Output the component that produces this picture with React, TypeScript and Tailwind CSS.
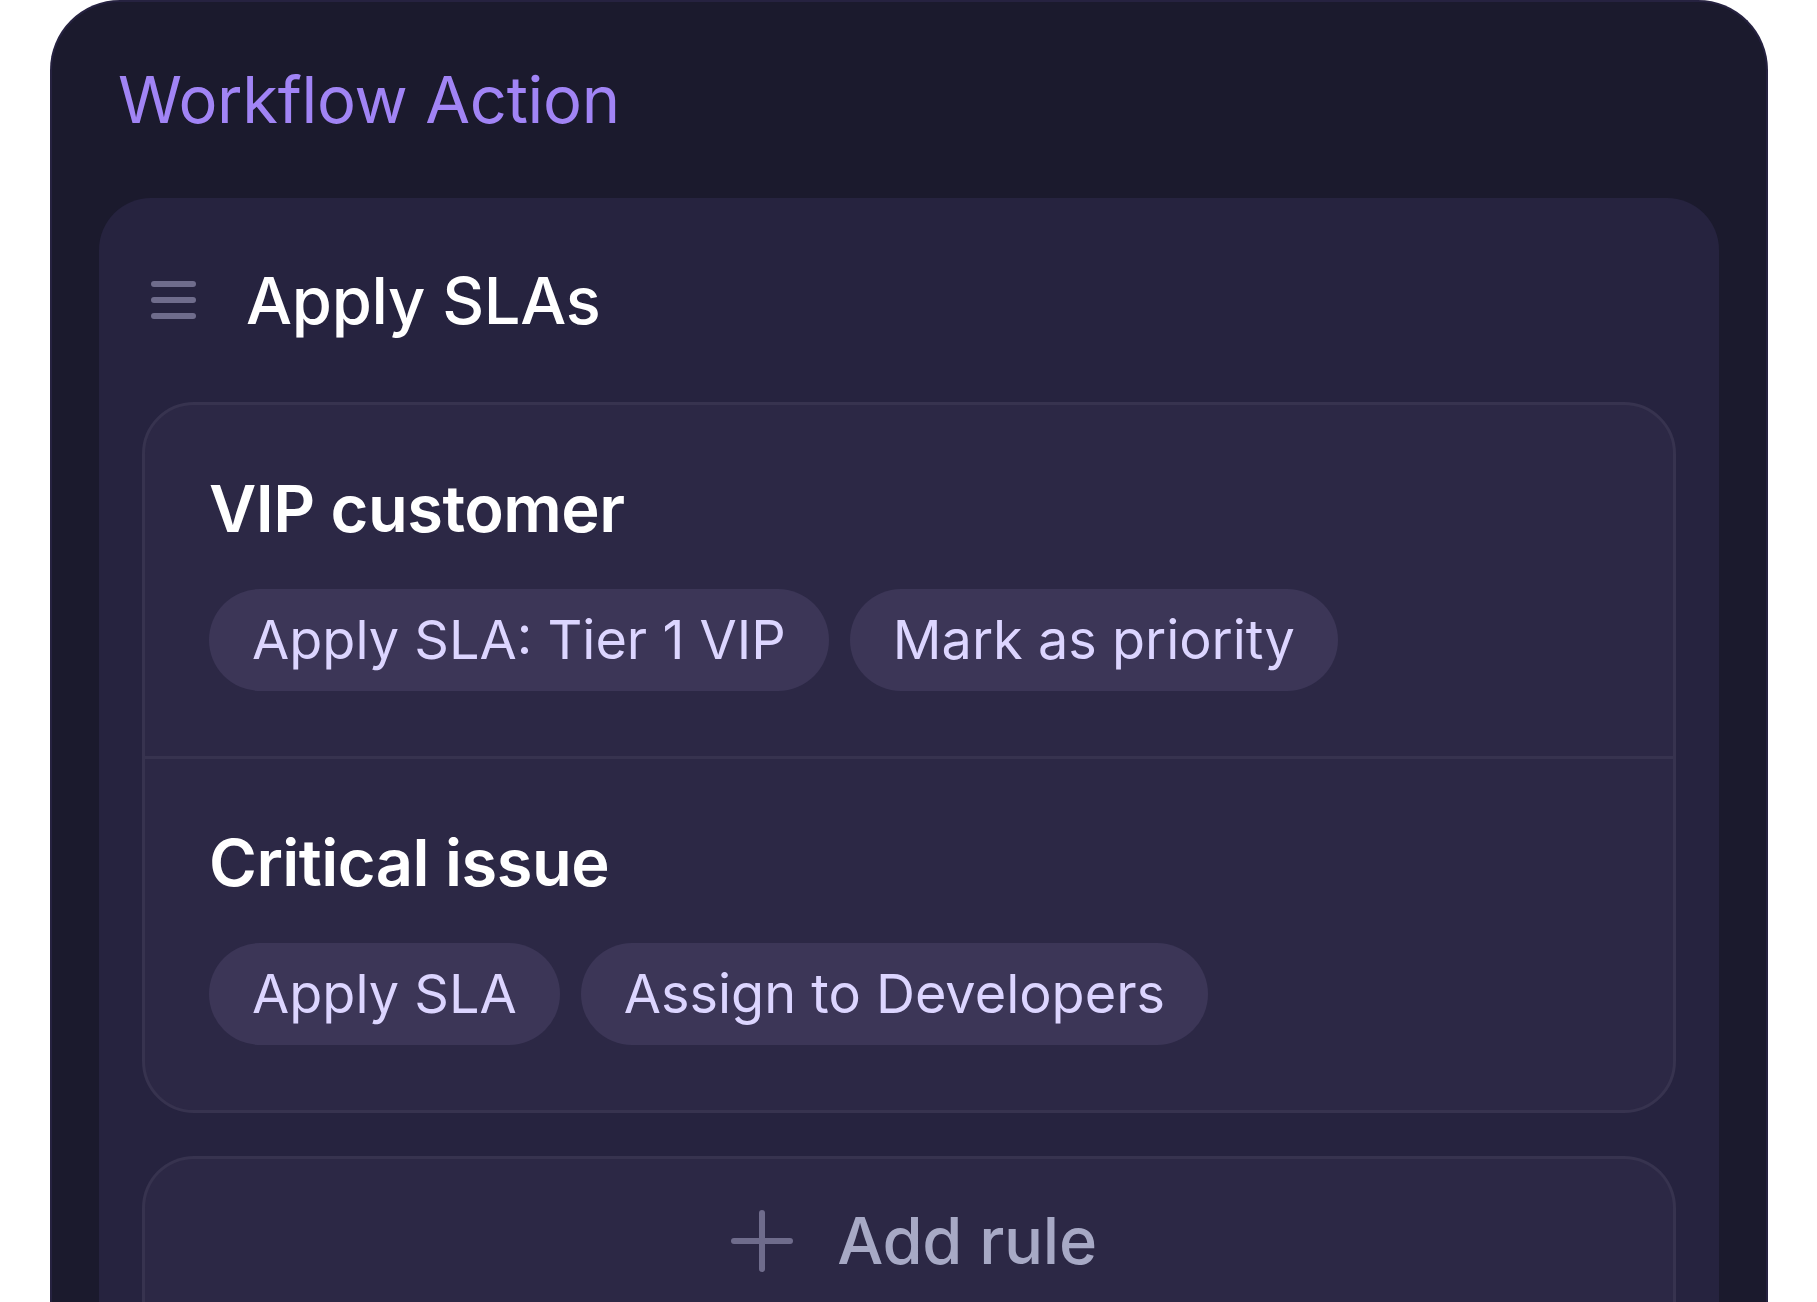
import React from "react";

const font = { fontFamily: "Inter, 'Noto Sans', sans-serif" };

function Chip({ label }: { label: string }) {
  return (
    <div className="flex h-[102px] items-center rounded-full bg-[#3c3657] px-[43px] text-[54px] font-normal leading-none text-[#dcd5ff]">
      {label}
    </div>
  );
}

function RuleSection({ title, chips, divider }: { title: string; chips: string[]; divider?: boolean }) {
  return (
    <div className={`flex flex-col pl-[64px] pt-[65px] pb-[65px] ${divider ? "border-b-[3px] border-[#37334f]" : ""}`}>
      <div className="text-[65px] font-semibold leading-[78px] tracking-[-0.5px] text-white">{title}</div>
      <div className="mt-[41px] flex gap-[21px]">
        {chips.map((c) => (
          <Chip key={c} label={c} />
        ))}
      </div>
    </div>
  );
}

export default function App() {
  return (
    <div className="min-h-[1302px] w-full overflow-hidden bg-white" style={font}>
      <div className="ml-[50px] h-[1302px] w-[1718px] rounded-t-[70px] border-x-[2px] border-t-[2px] border-[#262240] bg-[#1b1a2d] px-[47px] pt-[58px]">
        <div className="pl-[19px] text-[65px] font-normal leading-[80px] tracking-[-0.3px] text-[#a184f5]">
          Workflow Action
        </div>
        <div className="mt-[58px] h-[1200px] rounded-[52px] bg-[#26233f] px-[43px]">
          <div className="flex h-[204px] items-center gap-[50px] pl-[9px]">
            <svg width="45" height="38" viewBox="0 0 45 38">
              <rect x="0" y="0" width="45" height="6" rx="3" fill="#6f6c8c" />
              <rect x="0" y="16" width="45" height="6" rx="3" fill="#6f6c8c" />
              <rect x="0" y="32" width="45" height="6" rx="3" fill="#6f6c8c" />
            </svg>
            <div className="text-[65px] font-medium leading-none tracking-[-0.3px] text-white">Apply SLAs</div>
          </div>
          <div className="rounded-[52px] border-[3px] border-[#37334f] bg-[#2c2845]">
            <RuleSection title="VIP customer" chips={["Apply SLA: Tier 1 VIP", "Mark as priority"]} divider />
            <RuleSection title="Critical issue" chips={["Apply SLA", "Assign to Developers"]} />
          </div>
          <div className="mt-[43px] flex h-[200px] items-start justify-center gap-[44px] rounded-t-[52px] border-x-[3px] border-t-[3px] border-[#37334f] bg-[#2c2845] pl-[10px] pt-[45px]">
            <svg width="62" height="62" viewBox="0 0 62 62" className="mt-[6px]">
              <rect x="28" y="0" width="6" height="62" rx="3" fill="#6f6c8c" />
              <rect x="0" y="28" width="62" height="6" rx="3" fill="#6f6c8c" />
            </svg>
            <div className="text-[65px] font-medium leading-[74px] tracking-[-0.3px] text-[#a7a9c5]">Add rule</div>
          </div>
        </div>
      </div>
    </div>
  );
}
